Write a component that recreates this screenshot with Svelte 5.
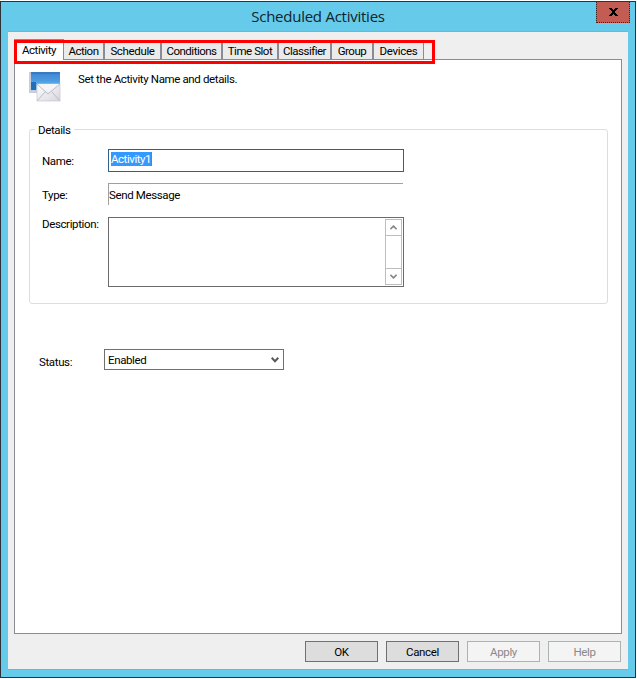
<script>
  const tabs = [
    { label: 'Activity', width: 50, spacing: -0.45 },
    { label: 'Action', width: 41, spacing: -0.5 },
    { label: 'Schedule', width: 57, spacing: -0.35 },
    { label: 'Conditions', width: 61, spacing: -0.5 },
    { label: 'Time Slot', width: 56, spacing: -0.45 },
    { label: 'Classifier', width: 53, spacing: -0.5 },
    { label: 'Group', width: 42, spacing: -0.45 },
    { label: 'Devices', width: 50, spacing: -0.3 }
  ];
  const actions = [
    { label: 'OK', kind: 'primary' },
    { label: 'Cancel', kind: 'normal' },
    { label: 'Apply', kind: 'disabled' },
    { label: 'Help', kind: 'disabled' }
  ];
  let active = $state('Activity');
</script>

<div class="window">
  <header>
    <h1>Scheduled Activities</h1>
    <button class="close" aria-label="Close">
      <svg width="9" height="8" viewBox="0 0 9 8" shape-rendering="crispEdges">
        <path d="M0 0h3v1h1v1h1V1h1V0h3v1H8v1H7v1H6v2h1v1h1v1h1v1H6V7H5V6H4v1H3v1H0V7h1V6h1V5h1V3H2V2H1V1H0z" fill="#000" />
      </svg>
    </button>
  </header>

  <div class="client">
    <nav>
      {#each tabs as tab}
        <button
          class="tab"
          class:active={active === tab.label}
          style="width:{tab.width}px;letter-spacing:{tab.spacing}px"
          onclick={() => (active = tab.label)}>{tab.label}</button>
      {/each}
      <div class="marker"></div>
    </nav>

    <main>
      <div class="intro">
        <svg width="32" height="31" viewBox="0 0 32 31">
          <defs>
            <linearGradient id="screen" x1="0" y1="0" x2="0" y2="1">
              <stop offset="0" stop-color="#3f83cd" />
              <stop offset="0.5" stop-color="#4b9ee4" />
              <stop offset="1" stop-color="#86ccf5" />
            </linearGradient>
            <linearGradient id="paper" x1="0" y1="0" x2="1" y2="1">
              <stop offset="0" stop-color="#fff" />
              <stop offset="1" stop-color="#d6d6de" />
            </linearGradient>
          </defs>
          <rect x="0" y="1" width="31" height="21" fill="#c9cedb" />
          <rect x="2" y="1" width="29" height="18" fill="url(#screen)" />
          <path d="M2 11h5v8H2z" fill="#236db9" />
          <path d="M2 1h29v2H2z" fill="#3979c4" />
          <path d="M8 13h23v17H8z" fill="url(#paper)" stroke="#c6c6d0" stroke-width=".7" />
          <path d="M8 13l11 10 12-10M8 30l8-9M31 30l-8-9" fill="none" stroke="#bcbcc8" stroke-width="1" />
          <path d="M9 13l10.500 8 10.500-8z" fill="#f5f5f8" />
        </svg>
        <p>Set the Activity Name and details.</p>
      </div>

      <section class="details">
        <h2>Details</h2>
        <div class="row name">
          <span class="label">Name:</span>
          <div class="input"><span class="selected">Activity1</span></div>
        </div>
        <div class="row type">
          <span class="label">Type:</span>
          <div class="readonly">Send Message</div>
        </div>
        <div class="row description">
          <span class="label">Description:</span>
          <div class="textarea">
            <div class="scrollbar">
              <div class="arrow">
                <svg width="7" height="5" viewBox="0 0 7 5"><path d="M0.4 4.2L3.5 1.1L6.6 4.2" /></svg>
              </div>
              <div class="track"></div>
              <div class="arrow">
                <svg width="7" height="5" viewBox="0 0 7 5"><path d="M0.4 .8L3.5 3.9L6.6 .8" /></svg>
              </div>
            </div>
          </div>
        </div>
      </section>

      <div class="status">
        <span class="label">Status:</span>
        <div class="select">
          <span>Enabled</span>
          <svg width="8" height="6" viewBox="0 0 8 6"><path d="M.7 .8L4 4.2L7.3 .8" /></svg>
        </div>
      </div>
    </main>

    <footer>
      {#each actions as action}
        <button class="action {action.kind}" disabled={action.kind === 'disabled'}>{action.label}</button>
      {/each}
    </footer>
  </div>
</div>

<style>
  :global(body) {
    background: #fff;
    overflow: hidden;
  }
  * {
    box-sizing: border-box;
  }
  button, h1, h2, p {
    margin: 0;
    padding: 0;
    font: inherit;
    color: inherit;
    letter-spacing: inherit;
  }
  .window {
    width: 636px;
    height: 677px;
    margin-top: 1px;
    padding: 0 7px 7px;
    border: 1px solid #2b3238;
    background: #66caea;
    font: 11.5px/14px Roboto, "Liberation Sans", sans-serif;
    letter-spacing: -0.37px;
    color: #000;
    white-space: nowrap;
    display: flex;
    flex-direction: column;
  }
  header {
    position: relative;
    height: 29px;
    flex: none;
    display: flex;
    justify-content: center;
  }
  h1 {
    font: 15px/29px "Open Sans", "Noto Sans", sans-serif;
    letter-spacing: -0.25px;
    color: #10252d;
  }
  .close {
    position: absolute;
    top: 0;
    right: -2px;
    width: 34px;
    height: 21px;
    border: 1px dotted #3b2422;
    border-top: 0;
    background: #c35d53;
    display: flex;
    align-items: center;
    justify-content: center;
  }
  .client {
    width: 620px;
    flex: 1;
    border-top: 1px solid #74b4cf;
    border-bottom: 1px solid #74b4cf;
    background: #efefef;
    padding: 7px 6px 0;
    display: flex;
    flex-direction: column;
  }
  nav {
    position: relative;
    height: 20px;
    flex: none;
    display: flex;
    align-items: flex-end;
  }
  .tab {
    height: 18px;
    border: 0;
    border-right: 2px solid #898c95;
    background: #ebebeb;
    line-height: 20px;
    text-align: center;
  }
  .tab:last-of-type {
    border-right-width: 1px;
  }
  .tab.active {
    position: relative;
    height: 21px;
    margin-bottom: -1px;
    border: 1px solid #898c95;
    border-bottom: 0;
    background: #fff;
    line-height: 20px;
  }
  .marker {
    position: absolute;
    left: 0;
    top: 1px;
    width: 421px;
    height: 24px;
    border: 3px solid #f00;
    pointer-events: none;
  }
  main {
    width: 608px;
    height: 575px;
    flex: none;
    border: 1px solid #898c95;
    background: #fff;
    padding: 10px 14px 0;
  }
  .intro {
    height: 59px;
    display: flex;
    gap: 17px;
    padding-top: 1px;
  }
  .intro p {
    padding-top: 1px;
  }
  .details {
    width: 579px;
    height: 175px;
    border: 1px solid #d5dfe5;
    border-radius: 3px;
  }
  h2 {
    width: 39px;
    height: 14px;
    margin: -7px 0 0 5px;
    padding-left: 3px;
    background: #fff;
  }
  .row {
    display: flex;
    padding-left: 12px;
  }
  .label {
    width: 66px;
    flex: none;
  }
  .row.name {
    margin-top: 12px;
  }
  .row.name .label {
    padding-top: 5px;
  }
  .input {
    width: 296px;
    height: 23px;
    border: 1px solid #2d628d;
    padding: 2px;
    display: flex;
    align-items: flex-start;
  }
  .selected {
    height: 14px;
    background: #3399ff;
    color: #fff;
    letter-spacing: -0.45px;
    border-right: 1px solid #c46a20;
  }
  .row.type {
    margin-top: 11px;
  }
  .row.type .label {
    padding-top: 5px;
  }
  .readonly {
    width: 295px;
    height: 22px;
    border-top: 1px solid #a0a0a0;
    border-left: 1px solid #a0a0a0;
    padding-top: 4px;
  }
  .row.description {
    margin-top: 12px;
  }
  .textarea {
    width: 296px;
    height: 70px;
    border: 1px solid #6b6b6b;
    padding: 1px;
    display: flex;
    justify-content: flex-end;
  }
  .scrollbar {
    width: 17px;
    height: 66px;
    border: 1px solid #bdbdbd;
    display: flex;
    flex-direction: column;
  }
  .arrow {
    height: 15px;
    display: flex;
    align-items: center;
    justify-content: center;
  }
  .arrow path {
    fill: none;
    stroke: #858585;
    stroke-width: 1.6;
  }
  .track {
    flex: 1;
    border: solid #bdbdbd;
    border-width: 1px 0;
  }
  .status {
    margin: 45px 0 0 10px;
    display: flex;
  }
  .status .label {
    width: 65px;
    padding-top: 6px;
  }
  .select {
    width: 180px;
    height: 21px;
    border: 1px solid #707070;
    padding: 0 4px 0 3px;
    display: flex;
    align-items: center;
    justify-content: space-between;
  }
  .select path {
    fill: none;
    stroke: #555c55;
    stroke-width: 2;
  }
  footer {
    height: 29px;
    padding: 7px 1px 0;
    display: flex;
    justify-content: flex-end;
    gap: 8px;
  }
  .action {
    width: 73px;
    height: 21px;
    border: 1px solid #707070;
    background: #dddddd;
    line-height: 20px;
  }
  .primary {
    border-color: #3c7fb1;
  }
  .disabled {
    border-color: #adb2b5;
    background: #f4f4f4;
    color: #898989;
  }
</style>
